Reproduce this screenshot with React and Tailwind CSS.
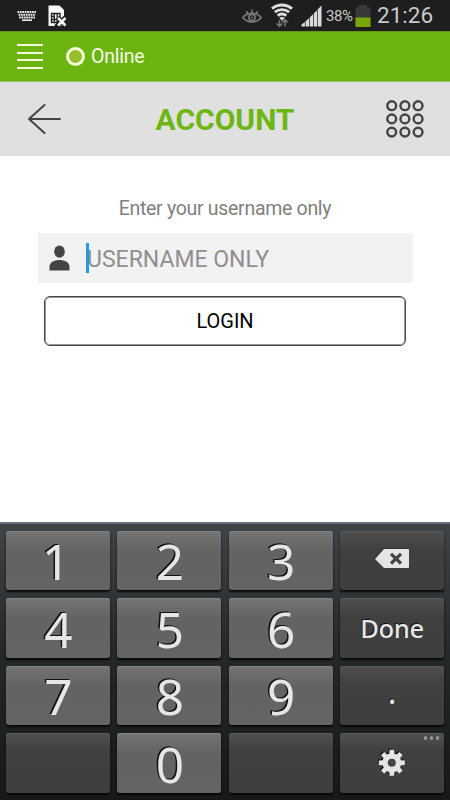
import React, { useState } from 'react';

const KEYS = [
  { label: '1' },
  { label: '2' },
  { label: '3' },
  { type: 'delete', dark: true },
  { label: '4' },
  { label: '5' },
  { label: '6' },
  { label: 'Done', dark: true, small: true },
  { label: '7' },
  { label: '8' },
  { label: '9' },
  { label: '.', dark: true, type: 'dot' },
  { type: 'blank', dark: true },
  { label: '0' },
  { type: 'blank', dark: true },
  { type: 'settings', dark: true },
];

const StatusBar = () => (
  <div className="flex h-[31px] shrink-0 items-center bg-[#1e1e1e] text-[#c9c9c9]">
    {/* Keyboard */}
    <svg className="ml-[17px]" width="20" height="12" viewBox="0 0 20 12" fill="none" stroke="#e8e8e8">
      <path d="M0.5 2H19" strokeWidth="2" strokeDasharray="1.8 0.6" />
      <path d="M1.5 4.8H18.5" strokeWidth="2" strokeDasharray="1.8 0.6" />
      <path d="M2 7.5H18" strokeWidth="2" strokeDasharray="1.8 0.6" />
      <path d="M5 10.2H15" strokeWidth="1.6" />
    </svg>
    {/* SIM missing */}
    <svg className="ml-[11px]" width="19" height="22" viewBox="0 0 19 22">
      <path d="M0.5 0.5H11.5L16 5V21H0.5Z" fill="#fafafa" />
      <path d="M3.5 8.5H12V17.5H3.5ZM6.3 8.5V17.5M9.2 8.5V17.5M3.5 11.5H7M3.5 14.5H9" fill="none" stroke="#222" strokeWidth="1.4" />
      <path d="M9.5 12.5L19 22M17.5 12.5L8 22" stroke="#1e1e1e" strokeWidth="5" />
      <path d="M10 13L17.5 20.5M17.5 13L10 20.5" stroke="#fafafa" strokeWidth="2.5" />
    </svg>
    {/* Smart stay */}
    <svg className="ml-auto" width="20" height="18" viewBox="0 0 20 18" fill="none" stroke="#777" strokeWidth="1.7">
      <path d="M0.8 10.5C5 5 15 5 19.2 10.5C15 16.3 5 16.3 0.8 10.5Z" />
      <circle cx="10" cy="10.5" r="3.1" />
      <circle cx="10" cy="10.5" r="1" fill="#777" stroke="none" />
      <path d="M10 2.5V6.2M4.2 4L6 6.8M15.8 4L14 6.8" />
    </svg>
    {/* Wifi */}
    <svg className="ml-[9px]" width="22" height="25" viewBox="0 0 22 25" fill="none">
      <g stroke="#dedede" strokeWidth="2.8">
        <path d="M1 5.6C7 0.8 15 0.8 21 5.6" />
        <path d="M3.9 9.2C8 5.8 14 5.8 18.1 9.2" />
        <path d="M6.7 12.7C9.3 10.6 12.7 10.6 15.3 12.7" />
      </g>
      <path d="M8.2 14.8C9.8 13.6 12.2 13.6 13.8 14.8L11 17.8Z" fill="#dedede" />
      <path d="M8.5 17V23M5.7 20.5L8.5 23.3L11.3 20.5M14 23.5V17M11.2 19.5L14 16.7L16.8 19.5" stroke="#777" strokeWidth="1.6" />
    </svg>
    {/* Signal */}
    <svg className="ml-[8px]" width="21" height="22" viewBox="0 0 21 22" fill="#dadada">
      <path d="M0.5 21.5V19.5L3.9 17V21.5Z" />
      <path d="M4.6 21.5V16.2L8 13.3V21.5Z" />
      <path d="M8.7 21.5V12.4L12.1 9.3V21.5Z" />
      <path d="M12.8 21.5V8.4L16.1 5.2V21.5Z" />
      <path d="M16.8 21.5V4.2L20.5 0.5V21.5Z" />
    </svg>
    <span className="mt-[2px] ml-[4px] w-[29px] text-[15px] leading-none tracking-[-0.4px] whitespace-nowrap">38%</span>
    {/* Battery */}
    <svg width="16" height="22" viewBox="0 0 16 22">
      <path d="M4 0H12V2.5H15.5V22H0.5V2.5H4Z" fill="#393939" />
      <path d="M0.5 12.5H15.5V22H0.5Z" fill="#76a80b" />
    </svg>
    <span className="mr-[16px] ml-[6px] w-[57px] text-[22.5px] leading-none whitespace-nowrap">21:26</span>
  </div>
);

const OnlineBar = () => (
  <div className="flex h-[50px] shrink-0 items-center border-t border-[#61960f] bg-[#6cb510]">
    <div className="ml-[17px] flex w-[26px] flex-col gap-[5.5px]">
      <div className="h-[2px] bg-[#f2fbdc]" />
      <div className="h-[2px] bg-[#f2fbdc]" />
      <div className="h-[2px] bg-[#f2fbdc]" />
      <div className="h-[2px] bg-[#f2fbdc]" />
    </div>
    <div className="ml-[23px] size-[19px] rounded-full border-[3px] border-[#f1fbd5] bg-[#95bf2b]" />
    <span className="ml-[6px] text-[19.5px] leading-none tracking-[-0.25px] text-[#f4fbe9]">Online</span>
  </div>
);

const Header = () => (
  <div className="flex h-[75px] shrink-0 items-center justify-between border-t border-[#9abf68] bg-[#e0e0e0] pr-[26px] pl-[27px]">
    <svg width="36" height="30" viewBox="0 0 36 30" fill="none" stroke="#444" strokeWidth="2" strokeLinecap="round" strokeLinejoin="round">
      <path d="M33 15H2M17.5 1L2 15L17.5 29" />
    </svg>
    <h1 className="mt-[2px] ml-[1px] text-[30px] leading-none font-bold text-[#6db613]">ACCOUNT</h1>
    <svg width="38" height="38" viewBox="0 0 38 38" fill="none" stroke="#444" strokeWidth="2.4">
      {[5.7, 18.9, 32.1].map((y) =>
        [5.7, 18.9, 32.1].map((x) => <circle key={`${x}-${y}`} cx={x} cy={y} r="4.4" />)
      )}
    </svg>
  </div>
);

const DeleteIcon = () => (
  <svg className="-translate-y-[2px]" width="37" height="23" viewBox="0 0 37 23">
    <path d="M1.4 11.4L10.4 1.4H33.7V20H9.7Z" fill="#2a2a2a" />
    <path d="M2 12L11 2H35Q36 2 36 3V20Q36 21 35 21H11Z" fill="#e5e5e5" />
    <path d="M18 6.8L28 16.5M28 6.8L18 16.5" stroke="#444" strokeWidth="3.2" />
  </svg>
);

const GearIcon = () => (
  <svg width="29" height="29" viewBox="-14.5 -14.5 29 29">
    {['#111', '#e5e5e5'].map((color, i) => (
      <g key={color} transform={i === 0 ? 'translate(-0.7 -0.7)' : 'translate(0.3 0.3)'}>
        {[0, 45, 90, 135].map((angle) => (
          <path key={angle} d="M-2.2 -13H2.2L3 0L2.2 13H-2.2L-3 0Z" fill={color} transform={`rotate(${angle})`} />
        ))}
        <circle r="9.5" fill={color} />
        <circle r="4" fill="#444" />
      </g>
    ))}
  </svg>
);

const Key = ({ item, onPress }) => {
  const look = item.dark
    ? 'bg-linear-to-b from-[#505050] via-[#404040] via-30% to-[#3e3e3e] shadow-[0_2px_2px_#080808,inset_0_1px_0_#5a5a5a]'
    : 'bg-linear-to-b from-[#747474] via-[#636363] via-35% to-[#646464] shadow-[0_2px_2px_#080808,inset_0_1px_0_#858585]';

  return (
    <button
      onClick={() => onPress(item)}
      className={`relative flex h-[59.5px] items-center justify-center rounded-[3px] font-['Noto_Sans',sans-serif] leading-none text-[#e6e6e6] ${look}`}
    >
      {item.type === 'delete' && <DeleteIcon />}
      {item.type === 'settings' && (
        <>
          <GearIcon />
          <span className="absolute top-[3px] right-[5px] flex gap-[2.5px]">
            <i className="size-[3.5px] rounded-full bg-[#999]" />
            <i className="size-[3.5px] rounded-full bg-[#999]" />
            <i className="size-[3.5px] rounded-full bg-[#999]" />
          </span>
        </>
      )}
      {item.type === 'dot' && (
        <span className="mb-[6px] text-[32px] [text-shadow:-1px_-1px_0_#111]">.</span>
      )}
      {item.label && !item.type && (
        <span
          className={
            item.small
              ? 'mt-[2px] text-[25.5px] font-medium tracking-[-0.3px] [text-shadow:-1px_-1px_0_#111]'
              : `mt-[3px] text-[49.5px] [text-shadow:-1px_-1px_0_#111,-1.5px_-1px_0_#111] ${item.label === '1' ? 'mr-[4px]' : 'ml-px'}`
          }
        >
          {item.label}
        </span>
      )}
    </button>
  );
};

const App = () => {
  const [username, setUsername] = useState('');

  const handlePress = (item) => {
    if (item.type === 'delete') {
      setUsername(username.slice(0, -1));
    } else if (item.label && item.label !== 'Done') {
      setUsername(username + item.label);
    }
  };

  return (
    <div className="flex h-[800px] w-[450px] flex-col overflow-hidden bg-white font-[Roboto,sans-serif]">
      <StatusBar />
      <OnlineBar />
      <Header />

      {/* Login form */}
      <div className="flex flex-1 flex-col items-center pt-[42px]">
        <p className="text-[19.5px] leading-[22px] tracking-[-0.3px] text-[#808080]">Enter your username only</p>
        <div className="mt-[13px] flex h-[50px] w-[375px] items-center bg-[#f2f2f2]">
          <svg className="ml-[11px]" width="21" height="26" viewBox="0 0 21 26" fill="#444">
            <ellipse cx="10.5" cy="6.6" rx="5.3" ry="6.2" />
            <path d="M0.5 25.5V22C0.5 17.5 5 15 10.5 15S20.5 17.5 20.5 22V25.5Z" />
          </svg>
          <div className="ml-[16.5px] h-[30px] w-[3px] bg-[#2699e6]" />
          <span className="mt-[2px] -ml-[2px] text-[23px] leading-none text-[#8f8f8f]">{username || 'USERNAME ONLY'}</span>
        </div>
        <button className="mt-[13px] h-[50px] w-[362px] rounded-[6px] border border-[#4a4648] text-[20px] leading-none text-black shadow-[inset_0_0_0_1px_#9a9798]">
          LOGIN
        </button>
      </div>

      {/* Keypad */}
      <div className="grid h-[278px] shrink-0 grid-cols-4 content-start gap-x-[7.3px] gap-y-[8px] border-t-2 border-[#667075] bg-linear-to-b from-[#3e4448] via-[#25292b] via-45% to-[#171918] px-[6px] pt-[6.5px]">
        {KEYS.map((item, i) => (
          <Key key={i} item={item} onPress={handlePress} />
        ))}
      </div>
    </div>
  );
};

export default App;
